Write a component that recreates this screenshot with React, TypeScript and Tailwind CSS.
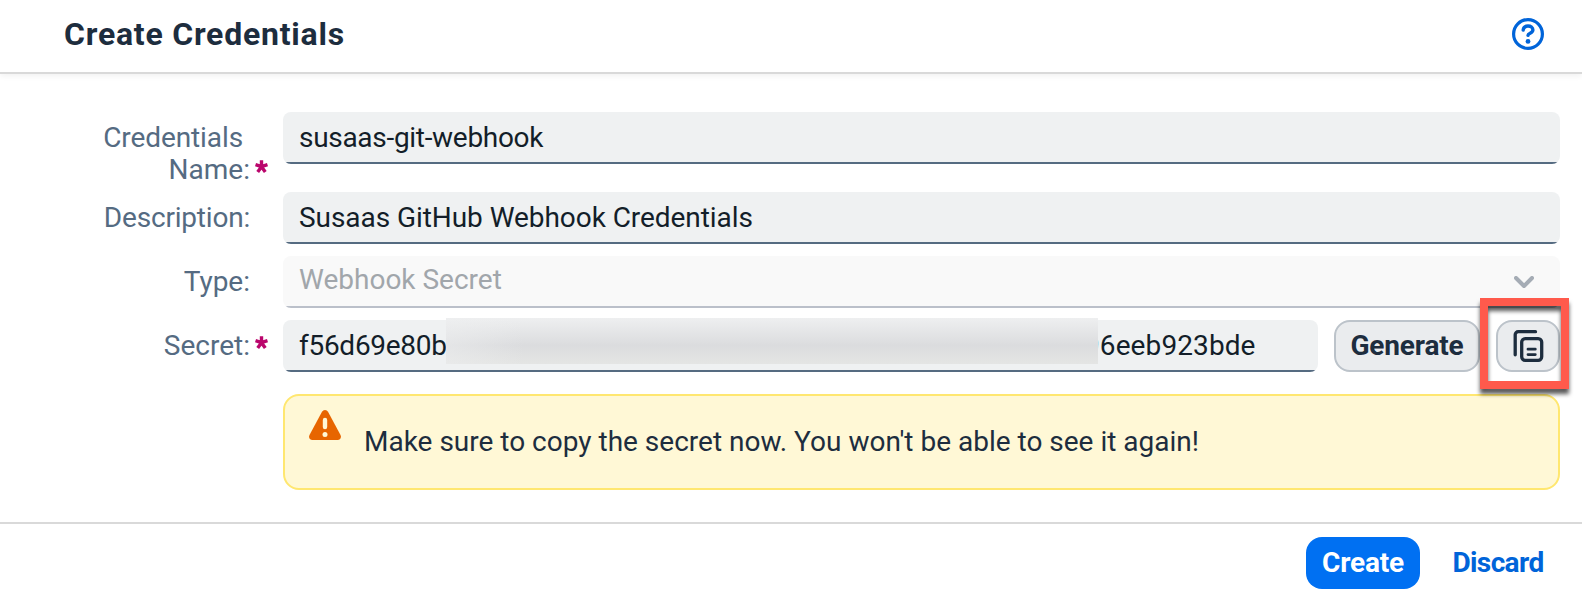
import type { ReactNode } from "react";

function HelpIcon() {
  return (
    <svg width="32" height="32" viewBox="0 0 32 32" fill="none" stroke="#0064d9" strokeWidth="3.200">
      <circle cx="16" cy="16" r="14.400" />
      <path d="M11.200 12c.3-2.500 2.200-4 4.800-4 2.800 0 4.900 1.600 4.900 4.100 0 3.200-4.700 3-4.900 5.200" strokeLinecap="round" strokeWidth="3.400" />
      <circle cx="16" cy="23.400" r="2.400" fill="#0064d9" stroke="none" />
    </svg>
  );
}

function CopyIcon() {
  return (
    <svg width="32" height="32" viewBox="0 0 32 32" fill="none" stroke="#1d2d3e" strokeWidth="3.300" strokeLinecap="round">
      <path d="M3.200 24.800V4.700A3 3 0 0 1 6.200 1.700H23.500" />
      <rect x="9.700" y="8.600" width="20" height="21.700" rx="3.500" />
      <path d="M16 19.200h7.300M16 24.600h7.300" strokeWidth="2.800" />
    </svg>
  );
}

function WarningIcon() {
  return (
    <svg width="32" height="30" viewBox="0 0 32 30">
      <path d="M13 1.800a3.500 3.500 0 0 1 6 0l12.500 23.200c1.200 2.500-.1 5-2.900 5H3.400c-2.800 0-4.100-2.500-2.900-5z" fill="#e76500" />
      <path d="M16 10v7" stroke="#fff8d6" strokeWidth="4.400" strokeLinecap="round" />
      <circle cx="16" cy="24.500" r="2.500" fill="#fff8d6" />
    </svg>
  );
}

function Star() {
  return (
    <svg width="13" height="13" viewBox="0 0 13 13" stroke="#ba066c" strokeWidth="3.400">
      <path d="M6.500 6.700V.2M6.500 6.700L.5 4.700M6.500 6.700l6-2M6.500 6.700l-3.800 5.300M6.500 6.700l3.800 5.300" />
    </svg>
  );
}

function Label({ children, required }: { children: ReactNode; required?: boolean }) {
  return (
    <div className="flex w-[283px] shrink-0 justify-end self-start pt-[10px] text-right leading-8 text-[#556b82]">
      <span>{children}</span>
      <span className="flex w-[33px] items-end pb-[13px] pl-[5px]">{required && <Star />}</span>
    </div>
  );
}

function Field({ children, disabled, className = "" }: { children: ReactNode; disabled?: boolean; className?: string }) {
  return (
    <div className={`flex h-[52px] flex-col overflow-hidden rounded-lg ${disabled ? "bg-[#f9f9f9] text-[#a1a6ab]" : "bg-[#eff1f2] text-[#131e29]"} ${className}`}>
      <div className="flex flex-1 items-center px-4 pt-[2px] leading-8">{children}</div>
      <div className={`h-[2px] shrink-0 ${disabled ? "bg-[#bbc0ca]" : "bg-[#556b81]"}`} />
    </div>
  );
}

export default function App() {
  return (
    <div className="flex h-[596px] w-[1582px] flex-col overflow-hidden bg-white font-['Roboto',sans-serif] text-[28px] leading-8">
      <header className="flex h-[74px] shrink-0 items-center justify-between border-b-2 border-[#d9d9d9] pr-[38px] pb-[4px] pl-[64px] shadow-[0_2px_6px_rgba(0,0,0,0.06)]">
        <h1 className="text-[32px] font-bold tracking-[0.77px] text-[#1d2d3e]">Create Credentials</h1>
        <HelpIcon />
      </header>

      <main className="flex flex-1 flex-col pt-[38px] pr-[22px]">
        <div className="flex h-20">
          <Label required>
            <span className="block pr-[7px] tracking-[-0.1px]">Credentials</span>
            <span className="block">Name:</span>
          </Label>
          <Field className="flex-1"><span className="tracking-[-0.3px]">susaas-git-webhook</span></Field>
        </div>
        <div className="flex h-16">
          <Label><span className="tracking-[-0.2px]">Description:</span></Label>
          <Field className="flex-1"><span className="tracking-[-0.06px]">Susaas GitHub Webhook Credentials</span></Field>
        </div>
        <div className="flex h-16">
          <Label>Type:</Label>
          <Field className="flex-1" disabled>
            <span className="flex-1 pb-1">Webhook Secret</span>
            <svg className="mr-[10px]" width="20" height="13" viewBox="0 0 20 13" fill="none" stroke="#a5acb5" strokeWidth="4" strokeLinecap="round" strokeLinejoin="round">
              <path d="M2 2l8 8 8-8" />
            </svg>
          </Field>
        </div>
        <div className="flex h-[74px]">
          <Label required>Secret:</Label>
          <div className="relative h-[52px] w-[1035px]">
            <Field>
              <span className="w-[785px] tracking-[-0.28px]">f56d69e80b</span>
              <span className="tracking-[0.1px]">96eeb923bde</span>
            </Field>
            <div className="absolute top-[-2px] left-[163px] h-[46px] w-[652px] overflow-hidden bg-linear-to-b from-[#eeeff0] via-[#dbdcde] via-60% to-[#e4e5e4]">
              <div className="h-full w-full bg-linear-to-r from-[#eeeff0]/50 via-transparent via-12% to-transparent" />
            </div>
          </div>
          <button className="ml-4 h-[52px] w-[146px] rounded-2xl border-2 border-[#bcc3ca] bg-[#eaecee] font-bold tracking-[-0.15px] text-[#1d2d3e]">Generate</button>
          <div className="relative ml-4 h-[52px] w-16">
            <button className="flex h-full w-full items-center justify-center rounded-2xl border-2 border-[#bcc3ca] bg-[#eaecee]">
              <CopyIcon />
            </button>
            <div className="absolute top-[-22px] left-[-16px] z-10 h-[91px] w-[89px] border-8 border-[#ff5a4c] drop-shadow-[0_5px_2px_rgba(0,0,0,0.65)]" />
          </div>
        </div>
        <div className="ml-[283px] flex h-24 shrink-0 rounded-2xl border-2 border-[#ffe770] bg-[#fff8d6] pl-[24px] text-[#1d2d3e]">
          <div className="pt-[14px]"><WarningIcon /></div>
          <p className="pt-[30px] pl-[23px]">Make sure to copy the secret now. You won't be able to see it again!</p>
        </div>
      </main>

      <footer className="flex h-[74px] shrink-0 items-start justify-end border-t-2 border-[#d9d9d9] pt-[13px] pr-[22px] font-bold">
        <button className="h-[52px] w-[114px] rounded-2xl bg-[#0070f2] tracking-[-0.2px] text-white">Create</button>
        <button className="ml-4 h-[52px] w-[124px] tracking-[-0.6px] text-[#0064d9]">Discard</button>
      </footer>
    </div>
  );
}
